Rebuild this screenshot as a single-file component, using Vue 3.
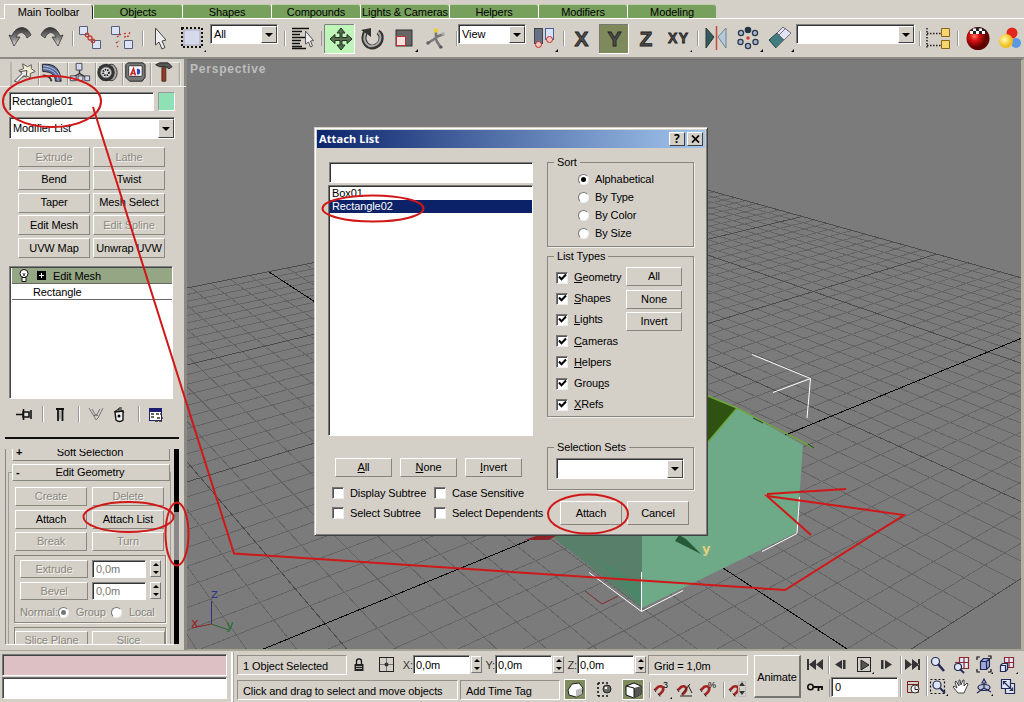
<script setup>
const tabs = ['Objects', 'Shapes', 'Compounds', 'Lights & Cameras', 'Helpers', 'Modifiers', 'Modeling']

const modifierButtons = [
  { t: 'Extrude', off: true }, { t: 'Lathe', off: true },
  { t: 'Bend' }, { t: 'Twist' },
  { t: 'Taper' }, { t: 'Mesh Select' },
  { t: 'Edit Mesh' }, { t: 'Edit Spline', off: true },
  { t: 'UVW Map' }, { t: 'Unwrap UVW' },
]
const geometryButtons = [
  { t: 'Create', off: true }, { t: 'Delete', off: true },
  { t: 'Attach' }, { t: 'Attach List' },
  { t: 'Break', off: true }, { t: 'Turn', off: true },
]
const sorts = ['Alphabetical', 'By Type', 'By Color', 'By Size']
const types = [
  ['', 'G', 'eometry'], ['', 'S', 'hapes'], ['', 'L', 'ights'], ['', 'C', 'ameras'],
  ['', 'H', 'elpers'], ['Grou', 'p', 's'], ['', 'X', 'Refs'],
]
const axes = ['X', 'Y', 'Z']

// Ground grid: both line families meet on the horizon.
const HORIZON = -86
const VA = 2056
const VB = -280
const BASE = 648
const baseA = (i) => 266 + i * (i < 0 ? 62.6 : 64.7)
const baseB = (j) => 845.7 + j * 50
const at = (i, j) => {
  const ax = baseA(i) - VA
  const bx = baseB(j) - VB
  const s = (VB - VA) / (ax - bx)
  return [VA + ax * s, HORIZON + (BASE - HORIZON) * s]
}
const seg = (p, q) => `M${p[0].toFixed(1)} ${p[1].toFixed(1)}L${q[0].toFixed(1)} ${q[1].toFixed(1)}`
let minor = ''
let major = ''
let axis = ''
for (let i = -30; i <= 10; i++) {
  const d = seg(at(i, -16), at(i, 30))
  if (i === 0) axis += d
  else if (i % 10 === 0) major += d
  else minor += d
}
for (let j = -16; j <= 30; j++) {
  const d = seg(at(-30, j), at(10, j))
  if (j === 0) axis += d
  else if (j % 10 === 0) major += d
  else minor += d
}
</script>

<template>
  <div class="app">
    <header class="top">
      <nav class="tabs">
        <div class="tab active">Main Toolbar</div>
        <div v-for="t in tabs" :key="t" class="tab">{{ t }}</div>
      </nav>
      <div class="toolbar">
        <svg class="strip" width="206" height="38" viewBox="4 19 206 38">
          <defs>
            <linearGradient id="steel" x1="0" y1="0" x2="0" y2="1"><stop offset="0" stop-color="#333" /><stop offset=".6" stop-color="#888" /><stop offset="1" stop-color="#eee" /></linearGradient>
          </defs>
          <g stroke="#333" stroke-width=".8" fill="url(#steel)">
            <path d="M31 35 C27 25 16 25 12 36 L9 35 L14 46 L20 37 L16 37 C19 31 24 31 27 38 Z" />
            <path d="M41 35 C45 25 56 25 60 36 L63 35 L58 46 L52 37 L56 37 C53 31 48 31 45 38 Z" />
          </g>
          <g stroke="#999"><path d="M72.5 31V46M142.500 31V46" /></g><g stroke="#fff"><path d="M73.500 31V46M143.500 31V46" /></g>
          <g fill="#dde3f4" stroke="#55607c"><path d="M79.500 26.500h8v8h-8zM92.500 40.500h8v8h-8zM111.500 26.500h8v8h-8zM124.500 40.500h8v8h-8z" /></g>
          <g fill="none" stroke="#c23a30" stroke-width="1.300"><circle cx="87" cy="35" r="1.800" /><circle cx="90" cy="38" r="2" /><circle cx="93" cy="41" r="1.800" /><path d="M117 37l4-3M124 34l2-1M129 34l1-2M116 43l3-2M117 47l1-1M124 37l6-1" stroke-dasharray="2 1" /></g>
          <path d="M155.500 28v17l3.500-3 3 7 3-1.500-3-6.500 4-1z" fill="#eee" stroke="#444" />
          <rect x="184" y="30" width="16" height="15" fill="#d6daeb" stroke="#aab" />
          <rect x="182" y="28" width="20" height="19" fill="none" stroke="#111" stroke-width="2" stroke-dasharray="2 2" />
          <path d="M204 52h2v-2z" />
        </svg>
        <div class="combo c-all"><span>All</span><i class="dd"></i></div>
        <svg class="strip" width="180" height="38" viewBox="278 19 180 38">
          <path d="M284.500 31V46M321.500 31V46M456.500 31V46" stroke="#999" /><path d="M285.500 31V46M457.500 31V46" stroke="#fff" />
          <path d="M292 28.500h17M292 31.500h10M292 34.500h8M292 37.500h13M292 40.500h9M292 43.500h8M292 46.500h10M292 48.500h14" stroke="#111" stroke-width="1.400" />
          <path d="M305.500 31v13l3-2 2 5 2-1-2-5 3-.500z" fill="#eee" stroke="#555" />
          <rect x="324.500" y="24.500" width="30" height="29" fill="#bff5b8" stroke="#fff" /><path d="M324.500 53V24.500H354" fill="none" stroke="#808080" />
          <path d="M341 28l4 5h-3v4.500h5v-3l5 4.500-5 4.500v-3h-5V45h3l-4 5-4-5h3v-4.500h-5v3L330 39l5-4.500v3h5V33h-3z" fill="#566e50" stroke="#243224" />
          <path d="M366 31C360 42 369 50 376 46 C382 43 383 35 378 32" fill="none" stroke="#333" stroke-width="5" /><path d="M366 32C361 42 369 49 376 45 C381 42 382 36 378 32" fill="none" stroke="#aaa" stroke-width="2" />
          <path d="M361 30l10-2v9l-4-3z" fill="#333" />
          <rect x="396" y="30" width="16" height="16" fill="#666" stroke="#333" /><rect x="396.500" y="36.500" width="9" height="9" fill="#f6e1e1" stroke="#b33" />
          <path d="M415 52h3v-3z" />
          <path d="M436 31v9M436 38l-8 5M436 37l8-3M436 40l5 8" stroke="#777" stroke-width="2.600" fill="none" /><circle cx="436" cy="30.500" r="2.200" fill="#e9cf2f" /><circle cx="428" cy="43" r="1.800" fill="#666" /><circle cx="443" cy="34" r="1.800" fill="#aaa" /><circle cx="441" cy="47" r="1.600" fill="#555" />
        </svg>
        <div class="combo c-view"><span>View</span><i class="dd"></i></div>
        <svg class="strip" width="270" height="38" viewBox="526 19 270 38">
          <path d="M563.500 31V46M697.500 31V46" stroke="#999" /><path d="M564.500 31V46M698.500 31V46" stroke="#fff" />
          <rect x="534.500" y="28.500" width="8" height="15" fill="#687087" stroke="#444" /><rect x="545.500" y="28.500" width="8" height="11" fill="#d7e2fa" stroke="#47639b" />
          <g fill="#f5c7c4" stroke="#c22c26"><circle cx="538.500" cy="44.500" r="3" /><circle cx="549.500" cy="39.500" r="3" /></g><path d="M555 52h3v-3z" />
          <rect x="599" y="24" width="30" height="30" fill="#fff" /><path d="M599 53V24h29v1H600v28z" fill="#777" /><rect x="600" y="25" width="28" height="28" fill="#7f8a5c" />
          <g class="axis-caps" stroke="#222" stroke-width=".800" fill="#4c4c4c"><text x="574.500" y="46">X</text><text x="607.500" y="46">Y</text><text x="639.500" y="46">Z</text><text class="xy" x="668" y="43" textLength="20">XY</text></g>
          <path d="M690 52h2v-2z" />
          <path d="M706 28v20l8-11z" fill="#2e5a60" stroke="#333" /><path d="M726 28v20l-8-11z" fill="#b5cad8" stroke="#6e8291" /><path d="M716.500 26V50" stroke="#c64a38" stroke-width="1.500" />
          <g fill="#a7b4c7" stroke="#26364b" stroke-width="1.200"><circle cx="748" cy="30" r="2.700" fill="#234" /><circle cx="741" cy="33" r="2.600" /><circle cx="755" cy="33" r="2.600" /><circle cx="740.500" cy="42" r="2.600" /><circle cx="755.500" cy="42" r="2.600" /><circle cx="748" cy="46" r="2.600" /></g><circle cx="748" cy="38" r="1.700" fill="#d33" />
          <path d="M760 52h3v-3zM791 52h3v-3z" />
          <path d="M769 40l8-7 7 7-8 8z" fill="#417c80" stroke="#244" /><path d="M777 33l6-6 8 6-7 7z" fill="#e2e4f4" stroke="#667" /><path d="M779 35l7-7M776 48l15-15" stroke="#777" />
        </svg>
        <div class="combo c-sets"><span></span><i class="dd"></i></div>
        <svg class="strip" width="109" height="38" viewBox="915 19 109 38">
          <path d="M919.500 31V46M957.500 31V46" stroke="#999" /><path d="M920.500 31V46M958.500 31V46" stroke="#fff" />
          <path d="M927 28V49M927 33.500h14M927 45.500h14" stroke="#222" stroke-width="1.500" stroke-dasharray="1.500 1.500" />
          <path d="M941.500 28.500h8v8h-8zM941.500 40.500h8v8h-8z" fill="#f7d670" stroke="#8b6418" />
          <defs><radialGradient id="ball" cx=".35" cy=".4"><stop offset="0" stop-color="#ff7a6a" /><stop offset=".4" stop-color="#dd1212" /><stop offset="1" stop-color="#5e0000" /></radialGradient><radialGradient id="sun" cx=".4" cy=".4"><stop offset="0" stop-color="#fffbb0" /><stop offset="1" stop-color="#f0bd1c" /></radialGradient></defs>
          <circle cx="978" cy="38.500" r="11.500" fill="url(#ball)" />
          <path d="M970 31C973 26 983 26 986 31L984 34 972 34z" fill="#222" /><path d="M970 31h3v3h-3zM976 31h3v3h-3zM982 31h3v3h-3zM973 28.500h3v2.500h-3zM979 28.500h3v2.500h-3z" fill="#fff" />
          <circle cx="1016" cy="43" r="5" fill="#5a97e6" /><circle cx="1012" cy="33" r="5.500" fill="#e2261d" /><circle cx="1006" cy="41" r="7" fill="url(#sun)" />
        </svg>
      </div>
    </header>

    <main class="middle">
      <aside class="side">
        <svg class="side-tabs" width="186" height="28" viewBox="0 59 186 28">
          <path d="M37.500 87V62.500H183.500V87M67.500 63v23M96.500 63v23M124.500 63v23M153.500 63v23" fill="none" stroke="#f2f0ea" /><path d="M8 62V87M36.500 63v23M66.500 63v23M95.500 63v23M123.500 63v23M152.500 63v23M182.500 63v23" stroke="#999" fill="none" />
          <path d="M16 71l5-2-1-5 5 3 4-2 0 4 4 3-5 2 0 5-4-3-4 2 0-4z" fill="#f1eed0" stroke="#555" /><path d="M11.500 82l8-8-2-2 7-1-1 7-2-2-7 7z" fill="#eee" stroke="#444" />
          <path d="M40.500 64.500h5C55 65 59 71 60 82h-6c0-6-4-10-13-10z" fill="#586a9a" stroke="#222" /><path d="M41 69c9 0 15 4 16 13M41 66c12 1 17 7 18 13" fill="none" stroke="#b8c6e4" /><path d="M41 76c5 0 8 2 9 6" fill="none" stroke="#333" stroke-width="2" />
          <path d="M79 70v5M72 78l7-4 7 4" stroke="#333" stroke-width="1.500" fill="none" /><path d="M75.500 63.500h6v7h-6zM69.500 76.500h6v5h-6zM77.500 76.500h5v5h-5zM84.500 76.500h5v5h-5z" fill="#d2d9ec" stroke="#445" />
          <ellipse cx="112" cy="73" rx="6" ry="8.500" fill="#aaa" stroke="#333" /><circle cx="106.500" cy="73" r="9" fill="#333" /><circle cx="106.500" cy="73" r="5.500" fill="#ddd" stroke="#888" /><circle cx="106.500" cy="73" r="3" fill="none" stroke="#222" stroke-width="2" stroke-dasharray="1.500 1" />
          <path d="M127 65l2-2h16l2 2v13l-3 4h-13l-4-4z" fill="#777" stroke="#222" /><rect x="130" y="66" width="14" height="11" rx="1" fill="#fff" stroke="#333" /><path d="M132 76l3-7 2 7M133 74h4" stroke="#cc2525" stroke-width="1.700" fill="none" /><path d="M138.500 69v6h2c2-1 2-5 0-6z" fill="#3346bb" />
          <path d="M158 65l4-2h9l4 4-3 2-4-2h-6z" fill="#555" stroke="#222" /><path d="M164.500 68h4v14h-4z" fill="#9c3430" stroke="#431" />
        </svg>
        <div class="name-row"><div class="field name">Rectangle01</div><div class="swatch"></div></div>
        <div class="combo c-mod"><span>Modifier List</span><i class="dd"></i></div>
        <div class="btn-grid mods"><div v-for="b in modifierButtons" :key="b.t" class="btn" :class="{ off: b.off }">{{ b.t }}</div></div>
        <div class="stack">
          <div class="stack-row sel">
            <svg width="30" height="15" viewBox="18 268 30 15"><circle cx="24" cy="273.500" r="4" fill="#fff" stroke="#111" /><path d="M22 277.500h4v4h-4z" fill="#fff" stroke="#111" /><path d="M23 273l1 3 1-3" fill="none" stroke="#111" stroke-width=".700" /><rect x="37" y="271" width="9" height="9" /><path d="M39 275.500h5M41.500 273v5" stroke="#fff" /></svg>
            <span>Edit Mesh</span>
          </div>
          <div class="stack-row base">Rectangle</div>
        </div>
        <svg class="stack-tools" width="186" height="40" viewBox="0 399 186 40">
          <path d="M42.500 406v16M78.500 406v16M138.500 406v16" stroke="#999" /><path d="M43.500 406v16M79.500 406v16M139.500 406v16" stroke="#fff" />
          <path d="M16 414.500h7M23.500 409v11M23 412h6v5h-6zM31 410v9" stroke="#111" stroke-width="1.600" fill="#ddd" />
          <path d="M56 409h8M58 410v11M62.500 410v11" stroke="#111" stroke-width="1.800" /><path d="M60 411v8" stroke="#888" />
          <path d="M89 408l6 10 1 2 2-2 5-10M92 409l4 7 4-7M94 416l2-2 2 2" fill="none" stroke="#777" />
          <path d="M115 412l8-1v9c-2 2-5 2-7 0z" fill="#eee" stroke="#111" stroke-width="1.400" /><path d="M114 412l3-2h5l2 3M118 410l1-2h3" fill="none" stroke="#111" /><circle cx="119" cy="416" r="1.500" />
          <rect x="149.500" y="408.500" width="12" height="12" fill="#fff" stroke="#1d1d74" /><path d="M149 408h13v4h-13z" fill="#1d1d74" /><path d="M151 414h3M156 414h6M151 417h4M157 418h6M155 421h8" stroke="#333" stroke-width="1.600" stroke-dasharray="3 1" />
          <path d="M5 438h174" stroke="#111" stroke-width="2" />
        </svg>
        <div class="rolls">
          <div class="roll-view">
            <div class="roll-head cut"><b>+</b><span>Soft Selection</span></div>
            <div class="roll-head"><b>-</b><span>Edit Geometry</span></div>
            <div class="roll-body">
              <div class="btn-grid geo"><div v-for="b in geometryButtons" :key="b.t" class="btn" :class="{ off: b.off }">{{ b.t }}</div></div>
              <div class="box">
                <div v-for="n in ['Extrude', 'Bevel']" :key="n" class="num-row">
                  <div class="btn off">{{ n }}</div><div class="field dim">0,0m</div><div class="spin"></div>
                </div>
                <div class="normal"><span>Normal:</span><i class="radio on"></i><span>Group</span><i class="radio"></i><span>Local</span></div>
              </div>
              <div class="box last"><div class="btn off">Slice Plane</div><div class="btn off">Slice</div></div>
            </div>
          </div>
          <div class="bar"></div>
        </div>
      </aside>

      <section class="view">
        <svg width="834" height="590" viewBox="187 60 834 590">
          <g fill="none" shape-rendering="crispEdges">
            <path :d="minor" stroke="#646464" />
            <path :d="major" stroke="#4c4c4c" />
            <path :d="axis" stroke="#0a0a0a" />
          </g>
          <path d="M640 400L737 408 803 445 797 532 642 608 642 500z" fill="#6ea988" />
          <path d="M553 537V500h89v108z" fill="#577f69" />
          <path d="M600 560l42 48v-22z" fill="#4c8669" />
          <path d="M700 393l37 15-30 35h-10z" fill="#2f5212" />
          <path d="M708 396l29 12M708 442l29-34 77 40" fill="none" stroke="#6da63c" stroke-width="1.500" />
          <path d="M753 418l10 5M808 444l6 4" stroke="#233c13" />
          <path d="M788 434l14-6" stroke="#0a0a0a" />
          <g fill="none" stroke="#fff"><path d="M752 354.500L810.500 378.500 807 418M773 392.500L810.500 378.500M799.500 497L797 533.500 762 551.500M589 572.500L641.500 611.500 683 590.500M641.500 572V611" /></g>
          <path d="M585 591l17 13 16-8" fill="none" stroke="#7d2c2c" />
          <path d="M525 540l14-5h18l-8 5z" fill="#8c2328" />
          <path d="M675 541l4-6 7 4 15 15z" fill="#275a37" />
          <text class="gizmo" x="702" y="553" fill="#e2cf80">y</text>
          <path d="M211.500 601V624" stroke="#303084" /><path d="M211.500 624L192 628" stroke="#8e2525" /><path d="M211.500 624L229 630" stroke="#286334" />
          <text class="gizmo tripod" x="211" y="598" fill="#34348a">z</text><text class="gizmo tripod" x="191" y="627" fill="#9b1f1f">x</text><text class="gizmo tripod" x="226" y="629" fill="#2a6b36">y</text>
          <text class="view-name" x="190" y="73">Perspective</text>
        </svg>
      </section>
    </main>

    <footer class="status">
      <div class="listener"><div class="rec"></div><div class="inp"></div></div>
      <div class="info">
        <div class="line">
          <div class="cell sel-count">1 Object Selected</div>
          <svg width="53" height="22" viewBox="349 654 53 22"><path d="M357.500 664v-2.500c0-3.500 5-3.500 5 0V664" fill="none" stroke="#111" stroke-width="1.300" /><rect x="355.500" y="664" width="9" height="7" fill="#222" /><path d="M357 666.500h6M357 668.500h6" stroke="#aaa" /><rect x="380.500" y="657.500" width="14" height="14" fill="none" stroke="#222" /><path d="M381 664.500h13M387.500 658v13" stroke="#777" /><circle cx="387.500" cy="664.500" r="2" fill="#333" /></svg>
          <template v-for="a in axes" :key="a"><span class="ax">{{ a }}:</span><div class="field coord">0,0m</div><div class="spin"></div></template>
          <div class="cell grid-size">Grid = 1,0m</div>
        </div>
        <div class="line">
          <div class="cell prompt">Click and drag to select and move objects</div>
          <div class="cell tag">Add Time Tag</div>
          <svg width="189" height="23" viewBox="561 679 189 23">
            <g stroke="#fff"><rect x="564.500" y="679.500" width="21" height="20" fill="#7f8a5f" /><rect x="622.500" y="679.500" width="21" height="20" fill="#7f8a5f" /></g>
            <path d="M568 690l4-6 7-1 4 5-1 6-6 3-7-2z" fill="#fff" stroke="#222" /><path d="M576 690l6-2v6l-6 3z" fill="#bbb" />
            <path d="M598 683h11M598 683v13M598 696h11" stroke="#111" stroke-width="1.600" stroke-dasharray="2 2" fill="none" /><circle cx="607" cy="689" r="4" fill="#666" stroke="#222" /><circle cx="606" cy="688" r="1.300" fill="#fff" />
            <path d="M626 686l8-3 7 3v8l-7 4-8-3z" fill="#fff" stroke="#111" /><path d="M634 688l7-2v8l-7 4z" fill="#555" /><path d="M626 686l8 2v9" fill="none" stroke="#111" />
            <path d="M649.500 682v16M723.500 682v16" stroke="#999" /><path d="M650.500 682v16M724.500 682v16" stroke="#fff" />
            <g fill="none" stroke="#a32323" stroke-width="2.600"><path d="M655 690l3-3c4-2 7 1 4 5l-3 3M678 690l3-3c4-2 7 1 4 5l-3 3M701 690l3-3c4-2 7 1 4 5l-3 3M730 690l3-3c4-2 7 1 4 5l-3 3" /></g>
            <g stroke="#222" fill="none"><path d="M654 689l2 3M658 693.500l2 3M677 689l2 3M700 689l2 3M704 693.500l2 3M729 689l2 3M733 693.500l2 3M680 696h12M682 694l8-10M688 685l4 8" /></g>
            <path d="M670 699h2v-2z" />
            <text class="tiny" x="663" y="688">3</text><text class="tiny" x="708" y="688">%</text>
            <path d="M742 682l3 4h-6zM742 695l3-4h-6z" fill="#333" /><rect x="738.500" y="681.500" width="7" height="15" fill="none" stroke="#bbb" />
          </svg>
        </div>
      </div>
      <div class="animate">Animate</div>
      <div class="play">
        <svg width="124" height="24" viewBox="802 653 124 24">
          <g fill="#333"><path d="M807 659h2v11h-2zM816 659v11l-7-5.500zM823 659v11l-7-5.500zM842 660v9l-7-4.500zM843 660h2.500v9H843zM881 660h2.500v9H881zM885 660v9l7-4.500zM905 659v11l7-5.500zM912 659v11l7-5.500zM918 659h2v11h-2z" /><path d="M861 660v10l8-5z" fill="#555" stroke="#222" /></g>
          <rect x="857.500" y="657.500" width="13" height="14" fill="none" stroke="#222" /><path d="M872 674h2v-2z" /><path d="M828.500 656v18M900.500 656v18" stroke="#999" /><path d="M829.500 656v18M901.500 656v18" stroke="#fff" />
        </svg>
        <div class="play-row">
          <svg width="29" height="22" viewBox="802 676 29 22"><circle cx="810.500" cy="686" r="2.700" fill="none" stroke="#111" stroke-width="1.600" /><path d="M813 686h10M818.500 686v4M822 686v3" stroke="#111" stroke-width="1.800" /><path d="M829.500 678v18" stroke="#999" /></svg>
          <div class="field frame">0</div>
          <svg width="27" height="22" viewBox="898 676 27 22"><path d="M900.500 678v18" stroke="#999" /><path d="M901.500 678v18" stroke="#fff" /><path d="M907.500 680.500h11v11h-11zM907 683.500h12" fill="none" stroke="#7a1d1d" /><circle cx="915" cy="688" r="4" fill="#eee" stroke="#333" /><path d="M915 685.500v3h3" fill="none" stroke="#222" /></svg>
        </div>
      </div>
      <svg class="nav" width="98" height="50" viewBox="926 652 98 50">
        <path d="M927.500 656v40" stroke="#999" /><path d="M928.500 656v40" stroke="#fff" />
        <g fill="#dfe6f6" stroke="#222a55" stroke-width="1.200"><circle cx="936.500" cy="661.500" r="4" /><path d="M939 664l6 7" stroke-width="2.600" />
          <path d="M960.500 657.500h9v11h-9zM956 662.500h13M965 657v11" stroke="#8c2930" /><circle cx="959" cy="667" r="3.500" /><path d="M961 669l4 4" stroke-width="1.800" />
          <path d="M981.500 661.500l3-3h6v8l-3 3h-6zM981.500 661.500h6v8M987.500 661.500l3-3" fill="#9ca8d8" /><path d="M978 660v-3h3M989 656h3v3M978 669v3h3M989 672h3v-3" fill="none" stroke="#111" />
          <path d="M1005.500 657.500h9v10h-9zM1005 662.500h10M1010 657v10" stroke="#8c2930" /><path d="M1001.500 665.500l2-2h5v6l-2 2h-5zM1001.500 665.500h5v6" />
          <rect x="931.500" y="679.500" width="14" height="14" fill="none" stroke="#111" stroke-dasharray="2 2" /><circle cx="938" cy="685" r="4" /><path d="M941 688l5 5" stroke-width="2" />
          <path d="M959 693l-5-6 1-1 3 2-2-6 1-1 3 5 0-6h1l1 5 2-5h1l0 6 3-3 1 1-4 9z" fill="#fff" stroke="#333" stroke-width=".900" />
          <ellipse cx="985" cy="687.500" rx="6" ry="3" fill="#aeb9e0" fill-opacity=".6" /><path d="M985 681v7M985 688l-7 5M985 688l7 4" fill="none" /><path d="M983 683l2-4 2 4z" />
          <path d="M1006.500 683.500h9v10h-9z" /><path d="M1002.500 679.500h9v9h-9z" /><path d="M1004.500 681.500l9 9M1004.500 684.500v-3h3M1013.500 687.500v3h-3" fill="none" /></g>
        <path d="M992 674h2v-2zM1017 674h2v-2zM947 696h2v-2zM992 696h2v-2z" />
      </svg>
    </footer>

    <div class="dialog">
      <div class="title"><span>Attach List</span><i class="tb">?</i><i class="tb"><svg width="9" height="8" viewBox="0 0 9 8"><path d="M1 .500l7 7M8 .500l-7 7" stroke="#000" stroke-width="1.700" /></svg></i></div>
      <div class="body">
        <div class="left">
          <div class="field search"></div>
          <div class="list"><div>Box01</div><div class="picked">Rectangle02</div></div>
          <div class="pick"><div class="btn"><u>A</u>ll</div><div class="btn"><u>N</u>one</div><div class="btn"><u>I</u>nvert</div></div>
          <div class="opts">
            <label><i class="check"></i>Display Subtree</label><label><i class="check"></i>Case Sensitive</label>
            <label><i class="check"></i>Select Subtree</label><label><i class="check"></i>Select Dependents</label>
          </div>
        </div>
        <div class="right">
          <div class="group sort"><span class="legend">Sort</span>
            <label v-for="(s, i) in sorts" :key="s"><i class="radio" :class="{ on: i === 0 }"></i>{{ s }}</label>
          </div>
          <div class="group types"><span class="legend">List Types</span>
            <div class="checks"><label v-for="t in types" :key="t[2]"><i class="check"><svg width="9" height="9" viewBox="0 0 9 9"><path d="M1 3.500l2.500 2.800L8 1.500" fill="none" stroke="#000" stroke-width="2" /></svg></i><span>{{ t[0] }}<u>{{ t[1] }}</u>{{ t[2] }}</span></label></div>
            <div class="tbtns"><div class="btn">All</div><div class="btn">None</div><div class="btn">Invert</div></div>
          </div>
          <div class="group sets"><span class="legend">Selection Sets</span><div class="combo"><span></span><i class="dd"></i></div></div>
          <div class="go"><div class="btn">Attach</div><div class="btn">Cancel</div></div>
        </div>
      </div>
    </div>

    <svg class="marks" width="1024" height="702" viewBox="0 0 1024 702">
      <g fill="none" stroke="#d01818" stroke-width="2">
        <ellipse cx="52" cy="101.500" rx="49" ry="25.500" /><ellipse cx="373" cy="208.500" rx="50.500" ry="13" />
        <ellipse cx="128.500" cy="517" rx="45" ry="15" /><ellipse cx="177" cy="534" rx="11.500" ry="31.500" /><ellipse cx="588" cy="514" rx="40" ry="19.500" />
        <path d="M93 107L234 553.500 785 590 904 515 767 496 811 535M846 489L767 494" />
      </g>
    </svg>
  </div>
</template>

<style>
body { margin: 0; overflow: hidden; }
</style>

<style scoped>
* { box-sizing: border-box; }
.app { position: relative; width: 1024px; height: 702px; overflow: hidden; background: #d4d0c8; color: #000; font: 11px/13px "Liberation Sans", Arial, sans-serif; letter-spacing: -0.1px; white-space: nowrap; display: flex; flex-direction: column; }
i { font-style: normal; }
svg { display: block; flex: none; }
u { text-underline-offset: 1px; }

.top { height: 59px; border-bottom: 2px solid #8c8a82; flex: none; }
.tabs { display: flex; height: 19px; padding: 4px 0 0 4px; border-bottom: 1px solid #fff; }
.tab { width: 89px; height: 14px; background: #76a05c; border-left: 1px solid #fff; border-top: 1px solid #b9cfa9; border-radius: 2px 3px 0 0; text-align: center; line-height: 15px; }
.tab.active { background: #d4d0c8; height: 15px; border-top-color: #fff; border-right: 1px solid #222; border-radius: 0 4px 0 0; }
.toolbar { display: flex; height: 38px; padding-left: 4px; }
.axis-caps { font: bold 21px "Liberation Sans", Arial, sans-serif; letter-spacing: 0; }
.axis-caps .xy { font-size: 14px; }

.combo { display: flex; height: 20px; background: #fff; border: 1px solid #808080; border-right-color: #fff; border-bottom-color: #fff; box-shadow: inset 1px 1px #333; padding: 1px 0 0 3px; flex: none; }
.combo span { flex: 1; line-height: 18px; }
.dd { width: 16px; background: #d4d0c8; border: 1px solid #fff; border-right-color: #444; border-bottom-color: #444; display: flex; align-items: center; justify-content: center; }
.dd::after { content: ""; border: 4px solid transparent; border-top-color: #000; border-bottom: 0; }
.toolbar .combo { margin-top: 5px; }
.toolbar .combo span { line-height: 17px; }
.c-all, .c-view { width: 68px; }
.c-sets { width: 119px; }

.field { background: #fff; border: 1px solid #808080; border-right-color: #fff; border-bottom-color: #fff; box-shadow: inset 1px 1px #333; padding-left: 3px; flex: none; }
.btn { border: 1px solid #fff; border-right-color: #88867f; border-bottom-color: #88867f; text-align: center; display: flex; align-items: center; justify-content: center; }
.off { color: #8a8880; text-shadow: 1px 1px #f4f2ee; }

.middle { display: flex; height: 591px; flex: none; }
.side { width: 187px; height: 591px; border-right: 3px solid #8b8983; display: flex; flex-direction: column; }
.side-tabs { border-bottom: 1px solid #f4f2ec; }
.name-row { display: flex; gap: 4px; margin: 5px 0 0 9px; }
.name { width: 145px; height: 19px; line-height: 17px; padding-left: 2px; }
.swatch { width: 17px; height: 19px; background: #8fe0b4; border: 1px solid #999; border-right-color: #fff; border-bottom-color: #fff; }
.c-mod { width: 166px; height: 22px; margin: 6px 0 0 9px; }
.btn-grid { display: grid; }
.mods { grid-template-columns: 72px 72px; grid-auto-rows: 20px; gap: 2.75px 3px; margin: 8px 0 0 18px; }
.stack { width: 164px; height: 133px; margin: 8px 0 0 9px; background: #fff; border: 1px solid #808080; border-right-color: #fff; border-bottom-color: #fff; box-shadow: inset 1px 1px #444; padding: 1px 0 0 2px; flex: none; }
.stack-row { height: 16px; line-height: 16px; display: flex; border-bottom: 1px solid #666; }
.sel { background: #94a684; padding-left: 6px; gap: 5px; }
.base { padding-left: 21px; }
.rolls { display: flex; height: 195px; margin: 10px 0 0 5px; }
.roll-view { width: 169px; height: 196px; overflow: hidden; border-left: 1px solid #88867f; border-bottom: 1px solid #fff; padding: 0 3px 0 2px; }
.roll-head { height: 17px; margin: 3px 1px 0 4px; border: 1px solid #fff; border-right-color: #88867f; border-bottom-color: #88867f; display: flex; align-items: center; position: relative; z-index: 1; background: #d4d0c8; }
.roll-head b { width: 10px; padding-left: 3px; }
.roll-head span { flex: 1; text-align: center; padding-right: 12px; }
.roll-head.cut { height: 18px; margin-top: -6px; }
.roll-body { border: 1px solid #a09d95; border-bottom: 0; margin-top: -9px; padding: 14px 3px 0 6px; height: 200px; }
.geo { grid-template-columns: 72px 72px; grid-auto-rows: 19px; gap: 3.500px 5px; }
.box { width: 152px; height: 68px; border: 1px solid #88867f; box-shadow: 1px 1px #f4f2ec; margin: 4px 0 0 -1px; padding: 4px 0 0 5px; }
.num-row { display: flex; height: 22px; align-items: flex-start; }
.num-row .btn { width: 68px; height: 18px; margin-right: 4px; }
.dim { width: 54px; height: 18px; line-height: 17px; color: #77756f; margin-right: 4px; }
.spin { width: 11px; height: 17px; border: 1px solid #fff; border-right-color: #777; border-bottom-color: #777; display: flex; flex-direction: column; align-items: center; justify-content: space-between; padding: 2px 0; }
.spin::before, .spin::after { content: ""; border: 3px solid transparent; }
.spin::before { border-top: 0; border-bottom-color: #000; }
.spin::after { border-bottom: 0; border-top-color: #000; }
.normal { display: flex; align-items: center; height: 17px; color: #85837c; text-shadow: 1px 1px #f4f2ee; }
.normal .radio { margin: 0 7px 0 0; }
.normal .radio + span { margin-right: 5px; }
.box.last { display: flex; gap: 4px; padding: 3px 0 0 0; }
.box.last .btn { width: 73px; height: 19px; }
.bar { width: 5px; background: linear-gradient(#000 63px, #888 63px, #888 111px, #000 111px); }

.radio { width: 11px; height: 11px; border-radius: 50%; background: #fff; border: 1px solid #777; border-right-color: #eee; border-bottom-color: #eee; display: flex; align-items: center; justify-content: center; flex: none; }
.radio.on::after { content: ""; width: 5px; height: 5px; border-radius: 50%; background: #000; }
.normal .radio.on::after { background: #777; }
.check { width: 12px; height: 12px; background: #fff; border: 1px solid #777; border-right-color: #eee; border-bottom-color: #eee; box-shadow: inset 1px 1px #555; display: flex; align-items: center; justify-content: center; flex: none; }

.view { width: 837px; height: 591px; background: #7b7b7b; border-right: 3px solid #b3b09f; border-bottom: 1px solid #a6a48f; border-top: 1px solid #6d6d6d; overflow: hidden; }
.gizmo { font: bold 13px "DejaVu Sans", sans-serif; letter-spacing: 0; }
.gizmo.tripod { font-weight: normal; stroke: currentColor; stroke-width: 0; }
.view-name { font: bold 12px "Liberation Sans", Arial, sans-serif; letter-spacing: .8px; fill: #bdbdbd; }

.status { display: flex; height: 52px; border-top: 1px solid #aaa79e; flex: none; padding-top: 1px; }
.listener { width: 233px; padding: 2px 4px 0 2px; border-right: 2px solid #fff; }
.rec, .inp { height: 22px; border: 1px solid #777; border-right-color: #fff; border-bottom-color: #fff; box-shadow: inset 1px 1px #444; background: #dcc0c4; }
.inp { background: #fff; margin-top: 1px; }
.info { width: 519px; padding: 2px 0 0 3px; border-left: 1px solid #aaa; }
.line { display: flex; height: 25px; align-items: flex-start; }
.cell { height: 20px; line-height: 20px; border: 1px solid #918f87; border-right-color: #fff; border-bottom-color: #fff; padding-left: 5px; flex: none; margin-top: 1px; }
.sel-count { width: 110px; margin-right: 1px; }
.ax { width: 12px; line-height: 22px; flex: none; color: #333; text-align: right; }
.coord { width: 57px; height: 19px; line-height: 18px; margin: 1px 1px 0 0; padding-left: 2px; }
.line .spin { margin: 2px 1px 0 0; flex: none; }
.grid-size { width: 100px; margin-left: 1px; }
.prompt { width: 221px; margin-right: 2px; }
.tag { width: 100px; margin-right: 1px; }
.tiny { font: 9px "Liberation Sans", sans-serif; }
.animate { width: 47px; height: 43px; margin: 3px 1px 0 2px; border: 1px solid #fff; border-right: 2px solid #77756f; border-bottom: 2px solid #77756f; text-align: center; line-height: 42px; flex: none; }
.play { width: 123px; margin-top: 1px; flex: none; }
.play-row { display: flex; }
.frame { width: 67px; height: 20px; line-height: 19px; }

.dialog { position: absolute; left: 314px; top: 127px; width: 394px; height: 409px; background: #d4d0c8; border: 1px solid #d4d0c8; border-right-color: #404040; border-bottom-color: #404040; box-shadow: inset 1px 1px #fff, inset -1px -1px #808080; padding: 2px; }
.title { height: 18px; background: linear-gradient(90deg, #0c256c, #a2c6ee); color: #fff; display: flex; align-items: center; gap: 2px; padding: 0 2px; font: bold 11px/18px "Noto Sans", sans-serif; letter-spacing: .1px; }
.title span { flex: 1; }
.tb { width: 16px; height: 14px; background: #d4d0c8; color: #000; border: 1px solid #fff; border-right-color: #404040; border-bottom-color: #404040; display: flex; align-items: center; justify-content: center; font-size: 12px; }
.body { display: flex; padding: 14px 0 0 12px; }
.left { width: 218px; }
.search { width: 204px; height: 21px; }
.list { width: 205px; height: 251px; margin-top: 2px; background: #fff; border: 1px solid #777; border-right-color: #fff; border-bottom-color: #fff; box-shadow: inset 1px 1px #333; padding: 1px 0 0 1px; margin-left: -1px; }
.list div { height: 13px; padding-left: 2px; }
.picked { background: #0c2268; color: #fff; }
.pick { display: flex; gap: 8px; margin: 22px 0 0 6px; }
.pick .btn { width: 57px; height: 19px; }
.opts { display: grid; grid-template-columns: 102px 112px; grid-auto-rows: 20px; margin: 6px 0 0 3px; }
label { display: flex; align-items: center; gap: 6px; }
.right { width: 147px; }
.group { position: relative; border: 1px solid #88867f; box-shadow: 1px 1px #f0eee8; }
.legend { position: absolute; top: -7px; left: 6px; padding: 0 3px; background: #d4d0c8; }
.sort { height: 85px; padding: 8px 0 0 30px; }
.sort label { height: 17.800px; }
.types { height: 161px; margin-top: 9px; display: flex; padding-top: 10px; }
.checks { width: 78px; padding-left: 8px; }
.checks label { height: 21.200px; }
.tbtns .btn { width: 56px; height: 19px; margin: 0 0 3.500px; }
.sets { height: 43px; margin-top: 30px; padding: 10px 0 0 8px; }
.sets .combo { width: 128px; height: 21px; }
.go { display: flex; gap: 5px; margin: 11px 0 0 13px; }
.go .btn { width: 62px; height: 24px; flex: none; }
.marks { position: absolute; left: 0; top: 0; pointer-events: none; }
</style>
